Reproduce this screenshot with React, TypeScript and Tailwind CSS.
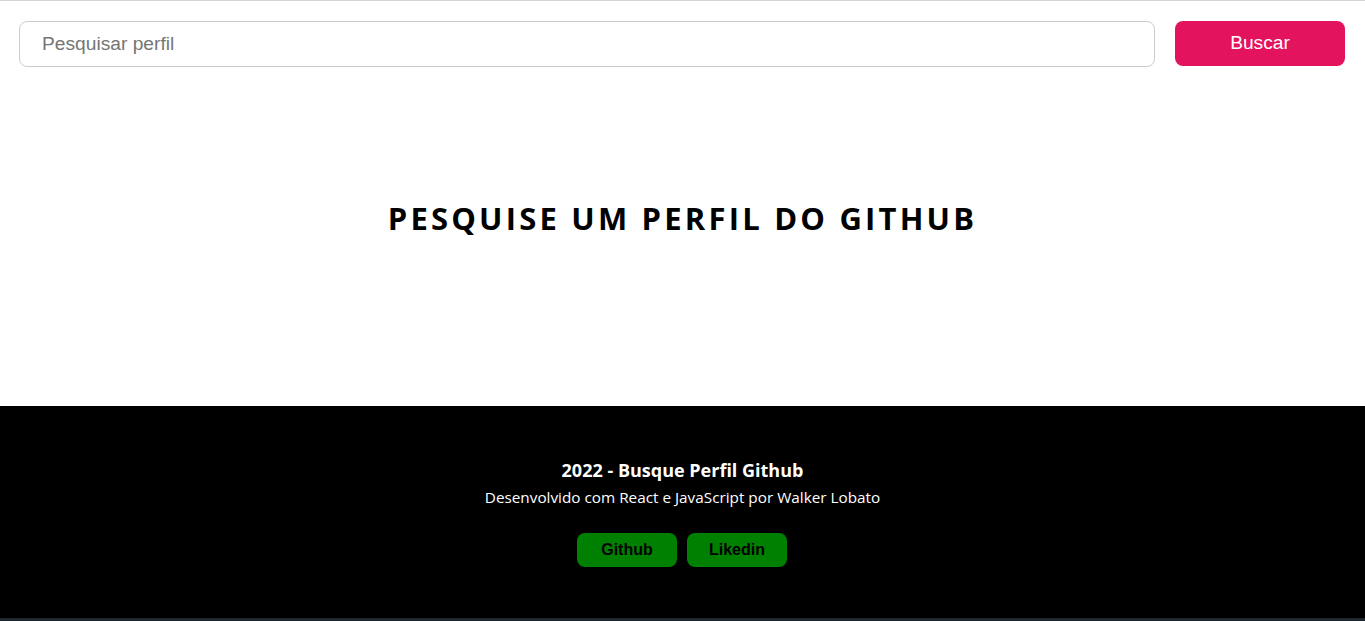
export default function App() {
  return (
    <div className="min-h-[621px] bg-white flex flex-col">
      {/* Search bar */}
      <header className="border-t border-[#d4d4d4] flex items-start gap-5 px-[19px] pt-5">
        <input
          type="text"
          placeholder="Pesquisar perfil"
          className="flex-1 h-[46px] rounded-lg border border-[#cccccc] px-[22px] text-[19.2px] text-black placeholder:text-[#757575] outline-none"
          style={{ fontFamily: '"Liberation Sans", Arial, sans-serif' }}
        />
        <button
          className="w-[170px] h-[45px] rounded-lg bg-[#e4135d] text-white text-[19.2px] mr-[1px]"
          style={{ fontFamily: '"Liberation Sans", Arial, sans-serif' }}
        >
          Buscar
        </button>
      </header>

      {/* Empty state */}
      <main className="h-[339px] flex items-start justify-center pt-[131px]">
        <h1 className="text-[31px] leading-[40px] font-bold uppercase tracking-[3.2px] text-black [font-family:'Open_Sans',sans-serif]">
          Pesquise um perfil do Github
        </h1>
      </main>

      {/* Footer */}
      <footer className="bg-black text-white flex flex-col items-center pt-[53px] pb-[51px] border-b-[3px] border-[#1e272b] [font-family:'Open_Sans',sans-serif]">
        <h2 className="text-[18px] leading-[22px] font-bold">2022 - Busque Perfil Github</h2>
        <p className="text-[15.3px] leading-[20px] mt-[6px]">Desenvolvido com React e JavaScript por Walker Lobato</p>
        <div className="flex gap-[10px] mt-[26px] mr-[1px] [font-family:'Liberation_Sans',Arial,sans-serif]">
          <a href="#" className="w-[100px] h-[34px] rounded-lg bg-[#008000] text-black font-bold text-[16px] flex items-center justify-center">
            Github
          </a>
          <a href="#" className="w-[100px] h-[34px] rounded-lg bg-[#008000] text-black font-bold text-[16px] flex items-center justify-center">
            Likedin
          </a>
        </div>
      </footer>
    </div>
  )
}
